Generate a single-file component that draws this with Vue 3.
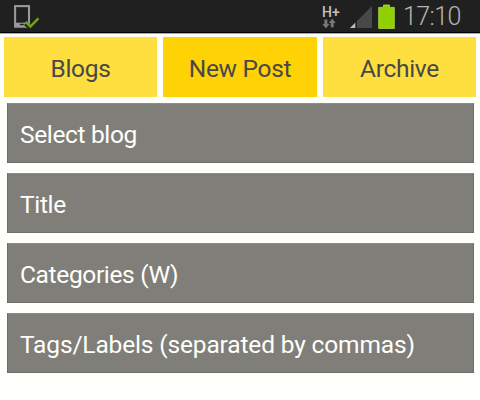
<template>
  <div class="screen">
    <header class="status-bar">
      <svg class="device-icon" viewBox="0 0 28 28" width="28" height="28">
        <rect x="3.1" y="3.1" width="13.9" height="20.6" fill="none" stroke="#999" stroke-width="2.1" />
        <path d="M3 19.7h14v4H3z" fill="#999" />
        <path d="M7.8 21.5h4" stroke="#222" stroke-width="1.4" />
        <path d="M13.5 20.5l5 4L26.5 16" fill="none" stroke="#202020" stroke-width="4.5" />
        <path d="M13.6 18.8l4.8 4.7L26.4 15.3" fill="none" stroke="#72a80a" stroke-width="2.5" />
      </svg>

      <div class="network">
        <span class="network-type">H+</span>
        <svg class="arrows" viewBox="0 0 14 11" width="14" height="11">
          <path d="M2.4 1.5h3v4.5h2L3.9 10.5L.4 6h2z" fill="#777" />
          <path d="M8.7 9.2V5H6.7L10.2.4L13.7 5h-2v4.2z" fill="#777" />
        </svg>
      </div>

      <svg class="signal" viewBox="0 0 22 22" width="22" height="22">
        <path d="M0 22L22 0v22z" fill="#484848" />
        <path d="M0 22l5.5-5.5V22z" fill="#bbb" />
        <path d="M6.2 13v9" stroke="#202020" stroke-width="1.4" />
      </svg>

      <svg class="battery" viewBox="0 0 17 25" width="17" height="25">
        <path d="M5.5 1h6v2.4h4.8v21H.7v-21h4.8z" fill="#91d000" stroke="#b2e03c" stroke-width=".8" />
      </svg>

      <span class="clock">17:10</span>
    </header>

    <nav class="tabs">
      <button
        v-for="tab in tabs"
        :key="tab"
        class="tab"
        :class="{ active: tab === activeTab }"
        @click="activeTab = tab"
      >
        {{ tab }}
      </button>
    </nav>

    <main class="fields">
      <div v-for="field in fields" :key="field" class="field">
        <span class="label">{{ field }}</span>
      </div>
    </main>
  </div>
</template>

<script setup>
  import { ref } from 'vue'

  const tabs = ['Blogs', 'New Post', 'Archive']
  const activeTab = ref('New Post')

  const fields = [
    'Select blog',
    'Title',
    'Categories (W)',
    'Tags/Labels (separated by commas)'
  ]
</script>

<style>
  body {
    background: #fffffb;
  }
</style>

<style scoped>
  .screen {
    width: 480px;
    height: 400px;
    overflow: hidden;
    background: #fffffb;
    font-family: Roboto, 'Liberation Sans', sans-serif;
  }

  .status-bar {
    display: flex;
    align-items: flex-start;
    box-sizing: border-box;
    height: 34px;
    padding: 3px 20px 0 12px;
    background: #202020;
    border-bottom: 1px solid #aaa;
    box-shadow: inset 0 -1px #000;
  }

  .network {
    display: flex;
    flex-direction: column;
    width: 20px;
    margin: 1px 8px 0 auto;
  }

  .network-type {
    height: 14px;
    font-size: 14px;
    font-weight: 500;
    line-height: 16px;
    color: #c4c4c4;
  }

  .signal {
    margin: 3px 6px 0 0;
  }

  .battery {
    margin: 1px 8px 0 0;
  }

  .clock {
    width: 57px;
    font-size: 25px;
    line-height: 27px;
    font-weight: 300;
    letter-spacing: -0.6px;
    color: #b4b4b4;
  }

  .tabs {
    display: flex;
    gap: 6.4px;
    padding: 3.3px 4px 0;
  }

  .tab {
    flex: 1 1 0;
    height: 59.6px;
    padding: 3px 0 0;
    border: none;
    background: #ffde40;
    color: #484848;
    font-family: inherit;
    font-size: 24.5px;
    letter-spacing: -0.3px;
    cursor: pointer;
  }

  .tab.active {
    background: #ffd205;
  }

  .fields {
    display: flex;
    flex-direction: column;
    gap: 10px;
    padding: 6.1px 6.5px 0 7px;
  }

  .field {
    display: flex;
    align-items: center;
    box-sizing: border-box;
    height: 60px;
    padding: 3px 12px 0;
    background: #807e79;
    border: 1px solid #6e6d69;
    border-top-color: #8d8c88;
    color: #fffffb;
    font-size: 24.5px;
    letter-spacing: -0.35px;
  }

  .field:last-child {
    letter-spacing: -0.15px;
  }

  .label {
    white-space: nowrap;
  }
</style>
